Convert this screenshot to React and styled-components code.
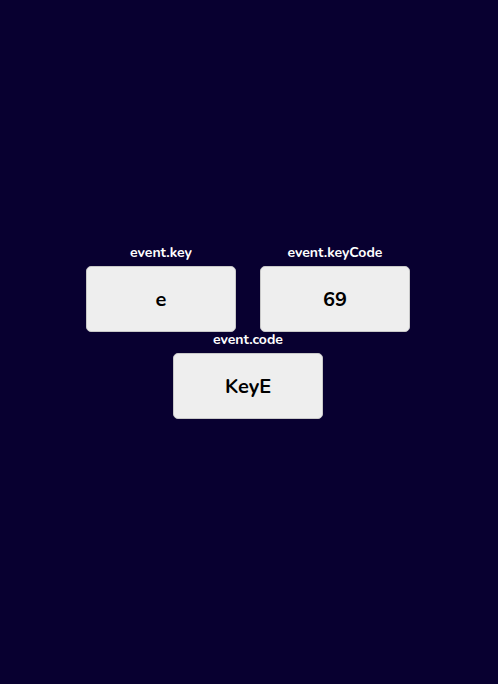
import styled, { createGlobalStyle } from "styled-components";

const GlobalStyle = createGlobalStyle`
  html, body {
    margin: 0;
    padding: 0;
    background: #080030;
    font-family: "Nunito", "Lato", "Open Sans", sans-serif;
  }
`;

const Page = styled.main`
  min-height: 100vh;
  box-sizing: border-box;
  display: flex;
  align-items: center;
  justify-content: center;
  padding: 0 2px 20px 0;
`;

const Grid = styled.div`
  width: 348px;
  display: flex;
  flex-wrap: wrap;
  justify-content: center;
`;

const Item = styled.div`
  width: 150px;
  margin: 0 12px;
  display: flex;
  flex-direction: column;
  align-items: center;
`;

const Label = styled.div`
  color: #fff;
  font-size: 14px;
  font-weight: 700;
  line-height: 16px;
  padding-bottom: 5px;
`;

const KeyBox = styled.div`
  width: 150px;
  height: 66px;
  box-sizing: border-box;
  background: #eeeeee;
  border: 1px solid #c8c8c8;
  border-radius: 5px;
  display: flex;
  align-items: center;
  justify-content: center;
  color: #000;
  font-size: 20px;
  font-weight: 700;
`;

const keys = [
  { label: "event.key", value: "e" },
  { label: "event.keyCode", value: "69" },
  { label: "event.code", value: "KeyE" },
];

export default function App() {
  return (
    <>
      <GlobalStyle />
      <Page>
        <Grid>
          {keys.map((k) => (
            <Item key={k.label}>
              <Label>{k.label}</Label>
              <KeyBox>{k.value}</KeyBox>
            </Item>
          ))}
        </Grid>
      </Page>
    </>
  );
}
